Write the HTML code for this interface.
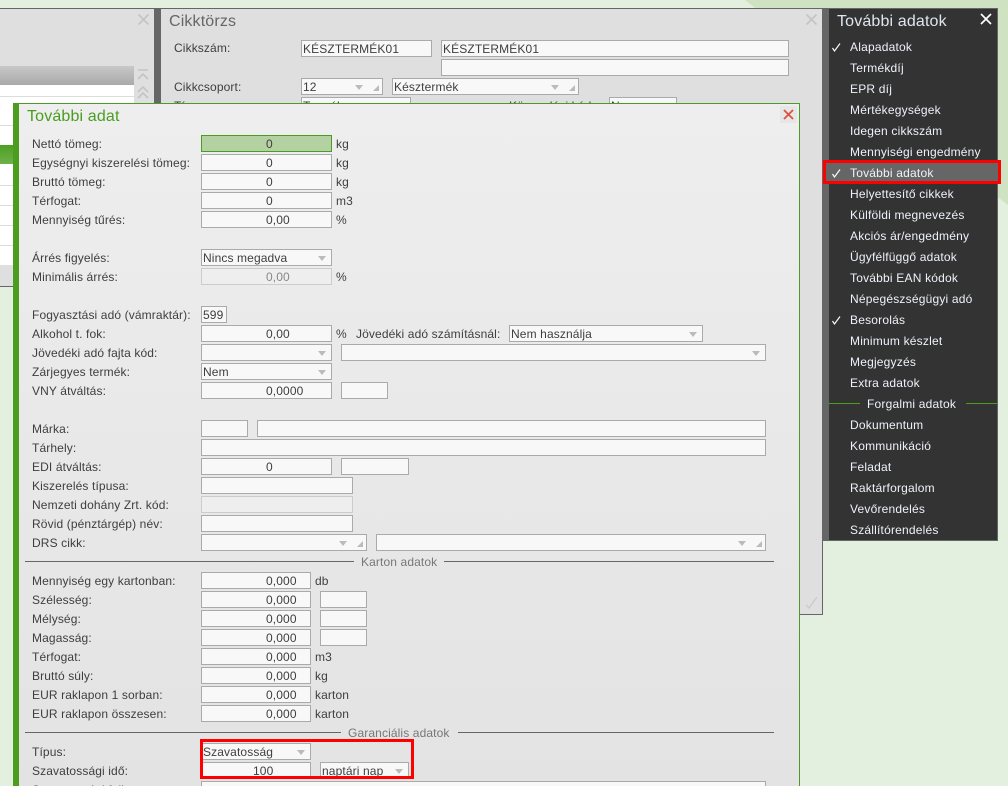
<!DOCTYPE html>
<html lang="hu"><head><meta charset="utf-8"><title>További adat</title>
<style>
html,body{margin:0;padding:0;width:1008px;height:786px;overflow:hidden;background:#e3efdf}
*{box-sizing:border-box}
body{position:relative;font:12px/19px "Liberation Sans",Arial,sans-serif;color:#3e3e3e}
div,span,svg{position:absolute}
.l{left:32px;white-space:nowrap;height:19px;letter-spacing:.12px}
.t{white-space:nowrap;height:19px;letter-spacing:.12px}
.i{height:17px;background:#f8f8f8;border:1px solid #aaa;color:#3e3e3e;padding:0 1px;white-space:nowrap;line-height:17px;letter-spacing:.12px;overflow:hidden}
.n{padding-left:64px}
.d{background:#eee;border-color:#ccc;color:#888;}
.a{position:absolute;top:6px;right:5px;width:0;height:0;border-left:4px solid transparent;border-right:4px solid transparent;border-top:5px solid #bbb}
.a.g{right:19px}
.gr{position:absolute;right:3px;bottom:3px;width:0;height:0;border-left:6px solid transparent;border-bottom:6px solid #bbb}
.hr{height:1px;background:#666}
.m{left:850px;color:#eef2fa;white-space:nowrap;height:25px;line-height:25px;letter-spacing:.2px}
.ttl{font-size:16px;line-height:22px;letter-spacing:.15px;white-space:nowrap}
</style></head><body>
<svg style="left:0;top:0" width="1008" height="786"><polygon points="745,0 1008,0 1008,205" fill="#cfe3c3"/></svg>

<!-- left background panel -->
<div style="left:0;top:8px;width:154px;height:279px;background:#dfdfdf;border-top:1px solid #666;border-bottom:1px solid #666"></div>
<div style="left:0;top:66px;width:134px;height:19px;background:linear-gradient(#c8c8c8,#a9a9a9)"></div>
<div style="left:0;top:85px;width:134px;height:180px;background:#fff"></div>
<div style="left:0;top:96px;width:134px;height:1px;background:#ddd"></div>
<div style="left:0;top:125px;width:134px;height:1px;background:#ddd"></div>
<div style="left:0;top:145px;width:134px;height:19px;background:linear-gradient(#4d9f22,#6fb04a)"></div>
<div style="left:0;top:185px;width:134px;height:1px;background:#ddd"></div>
<div style="left:0;top:205px;width:134px;height:1px;background:#ddd"></div>
<div style="left:0;top:225px;width:134px;height:1px;background:#ddd"></div>
<div style="left:0;top:245px;width:134px;height:1px;background:#ddd"></div>
<svg style="left:136px;top:12px" width="15" height="15"><path d="M2.5 2.5L12.5 12.5M12.5 2.5L2.5 12.5" stroke="#c4c4c4" stroke-width="1.8" fill="none"/></svg>
<svg style="left:136px;top:68px" width="15" height="34"><path d="M2 2H12M2 11L7 6L12 11M2 24L7 19L12 24M2 30L7 25L12 30" stroke="#c4c4c4" stroke-width="1.6" fill="none"/></svg>

<!-- Cikktörzs panel -->
<div style="left:154px;top:8px;width:7px;height:279px;background:#666"></div>
<div style="left:161px;top:8px;width:662px;height:607px;background:#dfdfdf;border-top:1px solid #666;border-right:1px solid #666;border-bottom:1px solid #666"></div>
<div class="ttl" style="left:169px;top:11px;color:#666">Cikktörzs</div>
<svg style="left:804px;top:12px" width="15" height="15"><path d="M2.5 2.5L12.5 12.5M12.5 2.5L2.5 12.5" stroke="#c4c4c4" stroke-width="1.8" fill="none"/></svg>
<svg style="left:803px;top:595px" width="16" height="16"><path d="M3 10L6 13L14 2" stroke="#cacaca" stroke-width="1.3" fill="none"/></svg>
<div class="t" style="left:174px;top:39px">Cikkszám:</div>
<div class="i" style="left:301px;top:40px;width:131px">KÉSZTERMÉK01</div>
<div class="i" style="left:441px;top:40px;width:348px">KÉSZTERMÉK01</div>
<div class="i" style="left:441px;top:59px;width:348px"></div>
<div class="t" style="left:174px;top:78px">Cikkcsoport:</div>
<div class="i" style="left:301px;top:78px;width:82px">12<span class="a g"></span><span class="gr"></span></div>
<div class="i" style="left:392px;top:78px;width:187px">Késztermék<span class="a g"></span><span class="gr"></span></div>
<div class="t" style="left:174px;top:97px">Típus:</div>
<div class="i" style="left:301px;top:97px;width:110px">Termék</div>
<div class="t" style="left:509px;top:97px">Könyvelési kód:</div>
<div class="i" style="left:609px;top:97px;width:68px">Nem</div>

<!-- Dialog -->
<div style="left:13px;top:103px;width:787px;height:683px;background:linear-gradient(#eee,#e3e3e3);border-top:1px solid #4c9a2a;border-right:1px solid #4c9a2a;border-left:6px solid #4a9d1f"></div>
<div class="ttl" style="left:27px;top:106px;color:#4a9d1f">További adat</div>
<div style="left:780px;top:106px;width:17px;height:17px;background:#e6e6e6"></div>
<svg style="left:781px;top:107px" width="15" height="15"><path d="M3 3L12 12M12 3L3 12" stroke="#d9533f" stroke-width="1.8" fill="none"/></svg>

<div class="l" style="top:135px">Nettó tömeg:</div><div class="i n" style="left:201px;top:135px;width:131px;background:#b3d1a1;border-color:#4c9a2a">0</div><div class="t" style="left:336px;top:135px">kg</div>
<div class="l" style="top:154px">Egységnyi kiszerelési tömeg:</div><div class="i n" style="left:201px;top:154px;width:131px">0</div><div class="t" style="left:336px;top:154px">kg</div>
<div class="l" style="top:173px">Bruttó tömeg:</div><div class="i n" style="left:201px;top:173px;width:131px">0</div><div class="t" style="left:336px;top:173px">kg</div>
<div class="l" style="top:192px">Térfogat:</div><div class="i n" style="left:201px;top:192px;width:131px">0</div><div class="t" style="left:336px;top:192px">m3</div>
<div class="l" style="top:211px">Mennyiség tűrés:</div><div class="i n" style="left:201px;top:211px;width:131px">0,00</div><div class="t" style="left:336px;top:211px">%</div>

<div class="l" style="top:249px">Árrés figyelés:</div><div class="i" style="left:201px;top:249px;width:131px">Nincs megadva<span class="a"></span></div>
<div class="l" style="top:268px">Minimális árrés:</div><div class="i n d" style="left:201px;top:268px;width:131px">0,00</div><div class="t" style="left:336px;top:268px">%</div>

<div class="l" style="top:306px">Fogyasztási adó (vámraktár):</div><div class="i" style="left:201px;top:306px;width:26px">599</div>
<div class="l" style="top:325px">Alkohol t. fok:</div><div class="i n" style="left:201px;top:325px;width:131px">0,00</div><div class="t" style="left:336px;top:325px">%</div>
<div class="t" style="left:356px;top:325px">Jövedéki adó számításnál:</div><div class="i" style="left:509px;top:325px;width:194px">Nem használja<span class="a"></span></div>
<div class="l" style="top:344px">Jövedéki adó fajta kód:</div><div class="i" style="left:201px;top:344px;width:131px"><span class="a"></span></div><div class="i" style="left:341px;top:344px;width:425px"><span class="a"></span></div>
<div class="l" style="top:363px">Zárjegyes termék:</div><div class="i" style="left:201px;top:363px;width:131px">Nem<span class="a"></span></div>
<div class="l" style="top:382px">VNY átváltás:</div><div class="i n" style="left:201px;top:382px;width:131px">0,0000</div><div class="i" style="left:341px;top:382px;width:47px"></div>

<div class="l" style="top:420px">Márka:</div><div class="i" style="left:201px;top:420px;width:47px"></div><div class="i" style="left:257px;top:420px;width:509px"></div>
<div class="l" style="top:439px">Tárhely:</div><div class="i" style="left:201px;top:439px;width:565px"></div>
<div class="l" style="top:458px">EDI átváltás:</div><div class="i n" style="left:201px;top:458px;width:131px">0</div><div class="i" style="left:341px;top:458px;width:68px"></div>
<div class="l" style="top:477px">Kiszerelés típusa:</div><div class="i" style="left:201px;top:477px;width:152px"></div>
<div class="l" style="top:496px">Nemzeti dohány Zrt. kód:</div><div class="i d" style="left:201px;top:496px;width:152px"></div>
<div class="l" style="top:515px">Rövid (pénztárgép) név:</div><div class="i" style="left:201px;top:515px;width:152px"></div>
<div class="l" style="top:534px">DRS cikk:</div><div class="i" style="left:201px;top:534px;width:166px"><span class="a g"></span><span class="gr"></span></div><div class="i" style="left:376px;top:534px;width:390px"><span class="a g"></span><span class="gr"></span></div>

<div class="hr" style="left:25px;top:561px;width:329px"></div>
<div class="t" style="left:361px;top:553px;color:#777">Karton adatok</div>
<div class="hr" style="left:444px;top:561px;width:330px"></div>

<div class="l" style="top:572px">Mennyiség egy kartonban:</div><div class="i n" style="left:201px;top:572px;width:110px">0,000</div><div class="t" style="left:315px;top:572px">db</div>
<div class="l" style="top:591px">Szélesség:</div><div class="i n" style="left:201px;top:591px;width:110px">0,000</div><div class="i" style="left:320px;top:591px;width:47px"></div>
<div class="l" style="top:610px">Mélység:</div><div class="i n" style="left:201px;top:610px;width:110px">0,000</div><div class="i" style="left:320px;top:610px;width:47px"></div>
<div class="l" style="top:629px">Magasság:</div><div class="i n" style="left:201px;top:629px;width:110px">0,000</div><div class="i" style="left:320px;top:629px;width:47px"></div>
<div class="l" style="top:648px">Térfogat:</div><div class="i n" style="left:201px;top:648px;width:110px">0,000</div><div class="t" style="left:315px;top:648px">m3</div>
<div class="l" style="top:667px">Bruttó súly:</div><div class="i n" style="left:201px;top:667px;width:110px">0,000</div><div class="t" style="left:315px;top:667px">kg</div>
<div class="l" style="top:686px">EUR raklapon 1 sorban:</div><div class="i n" style="left:201px;top:686px;width:110px">0,000</div><div class="t" style="left:315px;top:686px">karton</div>
<div class="l" style="top:705px">EUR raklapon összesen:</div><div class="i n" style="left:201px;top:705px;width:110px">0,000</div><div class="t" style="left:315px;top:705px">karton</div>

<div class="hr" style="left:25px;top:732px;width:316px"></div>
<div class="t" style="left:348px;top:724px;color:#777">Garanciális adatok</div>
<div class="hr" style="left:458px;top:732px;width:316px"></div>

<div class="l" style="top:743px">Típus:</div><div class="i" style="left:201px;top:743px;width:110px">Szavatosság<span class="a"></span></div>
<div class="l" style="top:762px">Szavatossági idő:</div><div class="i" style="left:201px;top:762px;width:110px;padding-left:51px">100</div><div class="i" style="left:320px;top:762px;width:89px">naptári nap<span class="a"></span></div>
<div class="l" style="top:781px">Szavatossági felirat:</div><div class="i" style="left:201px;top:781px;width:565px"></div>
<div style="left:200px;top:739px;width:214px;height:40px;border:3px solid #f00"></div>

<!-- Right menu -->
<div style="left:822px;top:8px;width:7px;height:533px;background:#666;border-top:1px solid #666"></div>
<div style="left:829px;top:8px;width:169px;height:533px;background:#333;border:1px solid #666;border-left:0"></div>
<div class="ttl" style="left:837px;top:11px;color:#dfe6ee">További adatok</div>
<svg style="left:979px;top:12px" width="14" height="14"><path d="M2 2L12 12M12 2L2 12" stroke="#fff" stroke-width="1.7" fill="none"/></svg>
<div style="left:829px;top:162px;width:168px;height:21px;background:#666"></div>
<svg style="left:831px;top:42px" width="10" height="11"><path d="M1.5 6L3.5 9L9 1.5" stroke="#fff" stroke-width="1.15" fill="none"/></svg>
<div class="m" style="top:35px">Alapadatok</div>
<div class="m" style="top:56px">Termékdíj</div>
<div class="m" style="top:77px">EPR díj</div>
<div class="m" style="top:98px">Mértékegységek</div>
<div class="m" style="top:119px">Idegen cikkszám</div>
<div class="m" style="top:140px">Mennyiségi engedmény</div>
<svg style="left:831px;top:168px" width="10" height="11"><path d="M1.5 6L3.5 9L9 1.5" stroke="#fff" stroke-width="1.15" fill="none"/></svg>
<div class="m" style="top:161px">További adatok</div>
<div class="m" style="top:182px">Helyettesítő cikkek</div>
<div class="m" style="top:203px">Külföldi megnevezés</div>
<div class="m" style="top:224px">Akciós ár/engedmény</div>
<div class="m" style="top:245px">Ügyfélfüggő adatok</div>
<div class="m" style="top:266px">További EAN kódok</div>
<div class="m" style="top:287px">Népegészségügyi adó</div>
<svg style="left:831px;top:315px" width="10" height="11"><path d="M1.5 6L3.5 9L9 1.5" stroke="#fff" stroke-width="1.15" fill="none"/></svg>
<div class="m" style="top:308px">Besorolás</div>
<div class="m" style="top:329px">Minimum készlet</div>
<div class="m" style="top:350px">Megjegyzés</div>
<div class="m" style="top:371px">Extra adatok</div>
<div style="left:829px;top:403px;width:31px;height:1px;background:#4a9d1f"></div>
<div class="m" style="left:867px;top:392px">Forgalmi adatok</div>
<div style="left:966px;top:403px;width:31px;height:1px;background:#4a9d1f"></div>
<div class="m" style="top:413px">Dokumentum</div>
<div class="m" style="top:434px">Kommunikáció</div>
<div class="m" style="top:455px">Feladat</div>
<div class="m" style="top:476px">Raktárforgalom</div>
<div class="m" style="top:497px">Vevőrendelés</div>
<div class="m" style="top:518px">Szállítórendelés</div>
<div style="left:823px;top:160px;width:178px;height:24px;border:3px solid #f00"></div>
</body></html>
